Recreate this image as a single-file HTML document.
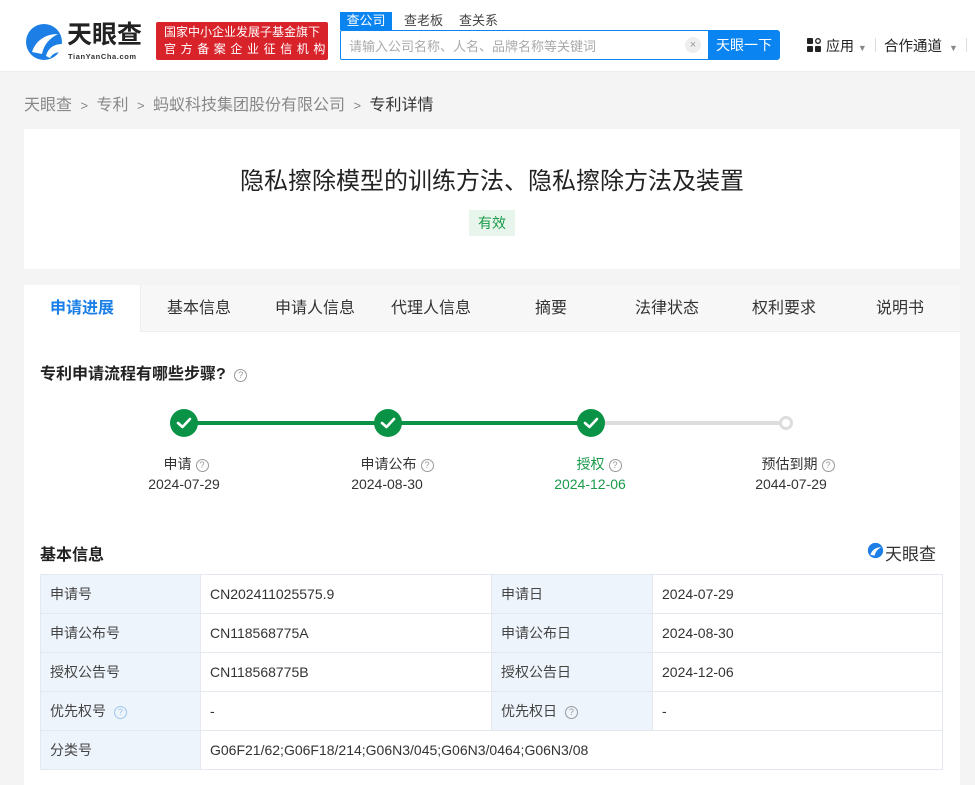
<!DOCTYPE html>
<html><head><meta charset="utf-8"><style>
*{margin:0;padding:0;box-sizing:border-box}
body{width:975px;height:776px;overflow:hidden;background:#f4f4f4;font-family:"Liberation Sans","Noto Sans CJK SC",sans-serif;color:#333;position:relative}
.abs{position:absolute}
.hdr{left:0;top:0;width:975px;height:72px;background:#fff;border-bottom:1px solid #ececec}
.card{background:#fff}
.q{display:inline-block;width:13px;height:13px;border:1px solid #999;border-radius:50%;font-size:9px;line-height:11px;text-align:center;color:#999;vertical-align:1px;margin-left:4px}
table{border-collapse:collapse;font-size:14px}
td{border:1px solid #e4e9ef;height:39px;padding:0 9px;color:#333}
td.l{background:#eef4fb;color:#444}
.tab{position:absolute;top:0;height:47px;line-height:47px;font-size:16px;text-align:center;color:#333;width:116px}
.dot{position:absolute;width:28px;height:28px;border-radius:50%;background:#0a9346;top:409px}
.dot svg{position:absolute;left:6px;top:7px}
.sl{position:absolute;font-size:14px;text-align:center;width:140px}
</style></head><body>
<div class="abs hdr"></div>
<svg class="abs" style="left:24px;top:22px" width="40" height="40" viewBox="0 0 40 40"><circle cx="20" cy="20" r="18" fill="#1d7fe6"/><path d="M8 30 C12 18 22 12 34 12 C26 16 20 22 18 32 Z" fill="#fff"/><path d="M22 34 C24 26 30 22 38 22 L38 30 C32 30 28 32 26 36Z" fill="#fff"/></svg>
<div class="abs" style="left:67px;top:21px;font-size:25px;font-weight:bold;color:#222;line-height:28px">天眼查</div>
<div class="abs" style="left:68px;top:52px;font-size:7.5px;font-weight:bold;color:#333;letter-spacing:.6px">TianYanCha.com</div>
<div class="abs" style="left:156px;top:22px;width:172px;height:38px;background:#d9232b;border-radius:2px;color:#fff;font-size:12px;line-height:17px;padding:2px 0 0 8px;white-space:nowrap">国家中小企业发展子基金旗下<br><span style="letter-spacing:4.6px">官方备案企业征信机构</span></div>
<div class="abs" style="left:340px;top:12px;width:52px;height:18px;background:#0a84f0;color:#fff;font-size:13px;text-align:center;line-height:18px">查公司</div>
<div class="abs" style="left:404px;top:12px;font-size:13px;line-height:18px;color:#444">查老板</div>
<div class="abs" style="left:459px;top:12px;font-size:13px;line-height:18px;color:#444">查关系</div>
<div class="abs" style="left:340px;top:30px;width:368px;height:30px;border:1px solid #0a84f0;border-right:none;background:#fff;border-radius:2px 0 0 2px"></div>
<div class="abs" style="left:349px;top:36px;font-size:13px;color:#aaa">请输入公司名称、人名、品牌名称等关键词</div>
<div class="abs" style="left:685px;top:37px;width:16px;height:16px;border-radius:50%;background:#eee;color:#999;font-size:11px;text-align:center;line-height:16px">×</div>
<div class="abs" style="left:708px;top:30px;width:72px;height:30px;background:#0a84f0;color:#fff;font-size:14px;text-align:center;line-height:30px;border-radius:0 3px 3px 0">天眼一下</div>
<svg class="abs" style="left:807px;top:38px" width="14" height="14"><rect x="0" y="0" width="6" height="6" rx="1" fill="#222"/><rect x="0" y="8" width="6" height="6" rx="1" fill="#222"/><rect x="8" y="8" width="6" height="6" rx="1" fill="#222"/><circle cx="11" cy="3" r="2.3" fill="none" stroke="#222" stroke-width="1.3"/></svg>
<div class="abs" style="left:826px;top:36px;font-size:14px;color:#222">应用 <span style="font-size:9px;color:#888">▼</span></div>
<div class="abs" style="left:875px;top:38px;width:1px;height:14px;background:#ddd"></div>
<div class="abs" style="left:884px;top:35px;font-size:14.5px;color:#222">合作通道 <span style="font-size:9px;color:#888;margin-left:3px">▼</span></div>
<div class="abs" style="left:966px;top:38px;width:1px;height:14px;background:#ddd"></div>
<div class="abs" style="left:24px;top:91px;font-size:16px;color:#888">天眼查 <span style="font-size:13px;margin:0 4px">&gt;</span> 专利 <span style="font-size:13px;margin:0 4px">&gt;</span> 蚂蚁科技集团股份有限公司 <span style="font-size:13px;margin:0 4px">&gt;</span> <span style="color:#333">专利详情</span></div>
<div class="abs card" style="left:24px;top:129px;width:936px;height:140px"></div>
<div class="abs" style="left:24px;top:161px;width:936px;text-align:center;font-size:24px;color:#222">隐私擦除模型的训练方法、隐私擦除方法及装置</div>
<div class="abs" style="left:469px;top:210px;width:46px;height:26px;background:#e8f5ec;color:#1a9a4a;font-size:14px;text-align:center;line-height:26px">有效</div>
<div class="abs card" style="left:24px;top:285px;width:936px;height:500px"></div>
<div class="abs" style="left:24px;top:285px;width:936px;height:47px;background:#f7f7f7;border-bottom:1px solid #eee">
<div class="tab" style="left:0;background:#fff;color:#1a7fe6;font-weight:bold;border-right:1px solid #eee;width:117px">申请进展</div>
<div class="tab" style="left:117px">基本信息</div>
<div class="tab" style="left:233px">申请人信息</div>
<div class="tab" style="left:349px">代理人信息</div>
<div class="tab" style="left:469px">摘要</div>
<div class="tab" style="left:585px">法律状态</div>
<div class="tab" style="left:702px">权利要求</div>
<div class="tab" style="left:818px">说明书</div>
</div>
<div class="abs" style="left:40px;top:360px;font-size:16px;font-weight:bold;color:#222">专利申请流程有哪些步骤? <span class="q" style="font-weight:normal">?</span></div>
<div class="abs" style="left:184px;top:421px;width:408px;height:4px;background:#0a9346"></div>
<div class="abs" style="left:592px;top:421px;width:194px;height:4px;background:#ddd"></div>
<div class="dot" style="left:170px"><svg width="16" height="14"><path d="M2 7 L6.5 11 L14 3" stroke="#fff" stroke-width="2.6" fill="none" stroke-linecap="round" stroke-linejoin="round"/></svg></div>
<div class="dot" style="left:374px"><svg width="16" height="14"><path d="M2 7 L6.5 11 L14 3" stroke="#fff" stroke-width="2.6" fill="none" stroke-linecap="round" stroke-linejoin="round"/></svg></div>
<div class="dot" style="left:577px"><svg width="16" height="14"><path d="M2 7 L6.5 11 L14 3" stroke="#fff" stroke-width="2.6" fill="none" stroke-linecap="round" stroke-linejoin="round"/></svg></div>
<div class="abs" style="left:779px;top:416px;width:14px;height:14px;border-radius:50%;border:3px solid #ddd;background:#fff"></div>
<div class="sl" style="left:116px;top:454px">申请<span class="q">?</span></div>
<div class="sl" style="left:114px;top:476px">2024-07-29</div>
<div class="sl" style="left:327px;top:454px">申请公布<span class="q">?</span></div>
<div class="sl" style="left:317px;top:476px">2024-08-30</div>
<div class="sl" style="left:529px;top:454px;color:#1a9a4a">授权<span class="q">?</span></div>
<div class="sl" style="left:520px;top:476px;color:#1a9a4a">2024-12-06</div>
<div class="sl" style="left:728px;top:454px">预估到期<span class="q">?</span></div>
<div class="sl" style="left:721px;top:476px">2044-07-29</div>
<div class="abs" style="left:40px;top:541px;font-size:16px;font-weight:bold;color:#222">基本信息</div>
<svg class="abs" style="left:867px;top:542px" width="17" height="17" viewBox="0 0 40 40"><circle cx="20" cy="20" r="18" fill="#1d7fe6"/><path d="M8 30 C12 18 22 12 34 12 C26 16 20 22 18 32 Z" fill="#fff"/></svg>
<div class="abs" style="left:885px;top:540px;font-size:17px;color:#333">天眼查</div>
<table class="abs" style="left:40px;top:574px;width:903px">
<tr><td class="l" style="width:160px">申请号</td><td style="width:291px">CN202411025575.9</td><td class="l" style="width:161px">申请日</td><td>2024-07-29</td></tr>
<tr><td class="l">申请公布号</td><td>CN118568775A</td><td class="l">申请公布日</td><td>2024-08-30</td></tr>
<tr><td class="l">授权公告号</td><td>CN118568775B</td><td class="l">授权公告日</td><td>2024-12-06</td></tr>
<tr><td class="l">优先权号 <span class="q" style="border-color:#9cc4ee;color:#9cc4ee">?</span></td><td>-</td><td class="l">优先权日 <span class="q">?</span></td><td>-</td></tr>
<tr><td class="l">分类号</td><td colspan="3">G06F21/62;G06F18/214;G06N3/045;G06N3/0464;G06N3/08</td></tr>
</table>
</body></html>
